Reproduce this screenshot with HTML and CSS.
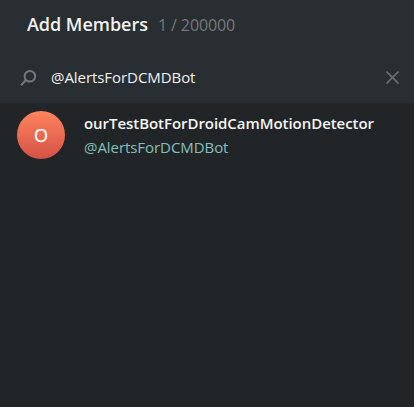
FILE: index.html
```html
<!DOCTYPE html>
<html lang="en">
<head>
<meta charset="utf-8">
<title>Add Members</title>
<link rel="stylesheet" href="styles.css">
</head>
<body>
<main class="dialog">
  <header class="header">
    <h1 class="title">Add Members</h1>
    <span class="count">1 / 200000</span>
  </header>
  <div class="search">
    <svg class="search-icon" width="18" height="18" viewBox="0 0 18 18"><circle cx="10.9" cy="7.2" r="5.3"/><path d="M7.1 11L2 16.2"/></svg>
    <span class="query">@AlertsForDCMDBot</span>
    <svg class="clear-icon" width="13" height="13" viewBox="0 0 13 13"><path d="M.5 .5L12.5 12.5M12.5 .5L.5 12.5"/></svg>
  </div>
  <section class="row">
    <div class="avatar">O</div>
    <div class="info">
      <div class="name">ourTestBotForDroidCamMotionDetector</div>
      <div class="handle">@AlertsForDCMDBot</div>
    </div>
  </section>
</main>
</body>
</html>
```
FILE: styles.css
```css
* { box-sizing: border-box; }
body { margin: 0; background: #212527; font-family: "Open Sans", sans-serif; font-size: 15px; }
.dialog { height: 407px; overflow: hidden; }
.header { display: flex; align-items: baseline; gap: 10px; height: 52px; padding: 12px 0 0 27px; background: #282e31; }
.title { margin: 0; font-size: 18px; line-height: 25px; font-weight: 600; color: #f1f1f1; letter-spacing: -0.03px; }
.count { font-size: 16px; color: #76797b; letter-spacing: -0.1px; }
.search { display: flex; align-items: center; height: 51px; padding: 0 15px 0 19px; background: #282e31; }
.search-icon, .clear-icon { fill: none; stroke: #74787a; stroke-width: 2; }
.clear-icon { stroke: #686d70; stroke-width: 1.7; margin-left: auto; }
.query { margin: 0 0 2px 14px; color: #f1f1f1; letter-spacing: -0.06px; }
.row { display: flex; gap: 19px; padding: 8px 17px; }
.avatar { width: 48px; height: 48px; border-radius: 50%; background: linear-gradient(#ff845e, #d45246); color: #fff; font-size: 18px; line-height: 49px; text-align: center; -webkit-text-stroke: 0.25px #fff; }
.name { font-weight: 600; line-height: 24px; color: #f5f5f5; letter-spacing: -0.05px; }
.handle { line-height: 24px; color: #84c0ba; letter-spacing: -0.06px; }
```
